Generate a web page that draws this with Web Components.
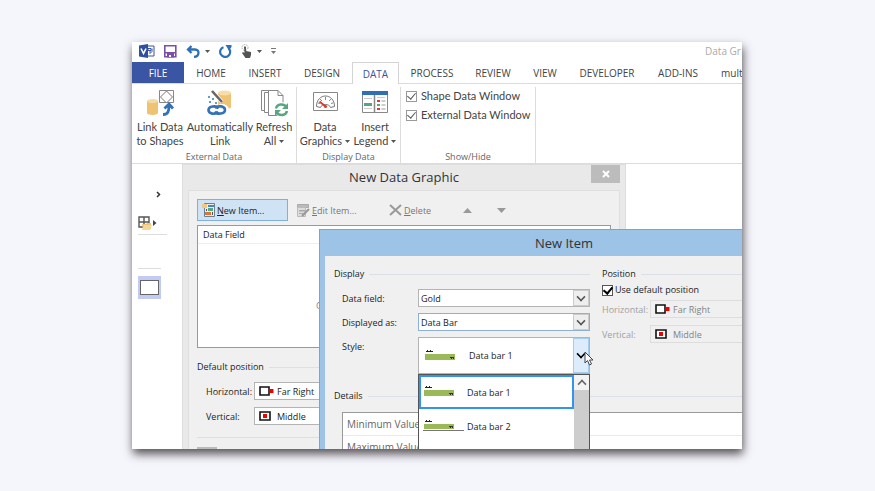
<!DOCTYPE html>
<html lang="en">
<head>
<meta charset="utf-8">
<title>Data Graphics</title>
<style>
  body { margin: 0; min-height: 100vh; display: flex; background: #f5f6fc; font-family: "Open Sans", "Noto Sans", sans-serif; color: #444; }
</style>
</head>
<body>
<app-window></app-window>
<script>
const define = (name, html) => customElements.define(name, class extends HTMLElement {
  connectedCallback() {
    if (this.shadowRoot) return;
    const t = document.createElement('template');
    t.innerHTML = typeof html === 'function' ? html(this) : html;
    this.attachShadow({ mode: 'open' }).append(t.content.cloneNode(true));
  }
});
const RESET = `:host,*{box-sizing:border-box} button,select,input{font:inherit;color:inherit;margin:0;padding:0;border:0;background:none;border-radius:0} svg{display:block;flex:none}`;

const ICONS = {
  visio: [16, 14, `<path d="M7 2h8v10H7z" fill="#fff" stroke="#3955a3"/><path d="M9 4.500h3v2H9zM11 6.500v3M11 9.500l2-2v-3" fill="none" stroke="#3955a3"/><path d="M0 1.500 9 0v14l-9-1.500z" fill="#2f4f9f"/><path d="m2 4.500 2.500 5 2.500-5" fill="none" stroke="#fff" stroke-width="1.600"/>`],
  save: [13, 13, `<path d="M.8.800h11v11h-11z" fill="#fff" stroke="#7b4fa8" stroke-width="1.600"/><path d="M1 7h11v1.500H1zM3 8h7v4.500H3z" fill="#7b4fa8"/><path d="M5 10h2v2H5z" fill="#fff"/>`],
  undo: [15, 13, `<path d="M2 4.500h7c5 0 4.500 7-1 7.500M5.500 1 2 4.500 5.500 8" fill="none" stroke="#2c6fba" stroke-width="2.300"/>`],
  redo: [13, 13, `<path d="M4.500 2.200a5 5 0 1 0 5 1" fill="none" stroke="#2c6fba" stroke-width="2.200"/><path d="M6.500 0h6v2L10 5.500z" fill="#2c6fba"/>`],
  touch: [12, 14, `<circle cx="4" cy="3.500" r="3" fill="none" stroke="#aaa" stroke-dasharray="1.500 1"/><path d="M3 3q1-1.500 2 0v4l5 1v3l-1 3H4.500L1 9l1-1 1.500 1z" fill="#555"/>`],
  caret: [5, 3, `<path d="M0 0h5L2.500 3z" fill="#555"/>`],
  more: [5, 6, `<path d="M0 0h5v1H0zM0 3h5L2.500 6z" fill="#777"/>`],
  link: [28, 30, `<path d="M13.500 2.500h14v12h-14z" fill="#fff" stroke="#888"/><path d="m20.500 3 6 6-6 6-6-6z" fill="#fff" stroke="#777"/><path d="M1 13v12c0 2.500 11 2.500 11 0V13z" fill="#eec374"/><ellipse cx="6.500" cy="13" rx="5.500" ry="2" fill="#f6dba0"/><path d="M17 26.500c5 0 6-3 6-9M18.500 20.500l4.500-4.500 4 4.500" fill="none" stroke="#3272b8" stroke-width="2.800"/>`],
  auto: [28, 30, `<path d="M12 5v14c0 3 13 3 13 0V5z" fill="#eec374"/><ellipse cx="18.500" cy="5" rx="6.500" ry="2.500" fill="#f7dda6"/><path d="m6 3 10 11" stroke="#fff" stroke-width="4"/><path d="m6 3 10 11" stroke="#666" stroke-width="2.600"/><path d="M2 8h2v2H2zM6 10h2v2H6zM3 13h2v2H3zM9 14h2v2H9z" fill="#6b99cc"/><g fill="none" stroke="#fff" stroke-width="6"><ellipse cx="8" cy="22" rx="4" ry="3"/><ellipse cx="16" cy="22" rx="4" ry="3"/></g><g fill="none" stroke="#3272b8" stroke-width="2.600"><path d="M12.500 20.500c-2-3.500-10-2.500-10 1.500s7 5 10 2"/><path d="M9 23.500c2 3.500 10 2.500 10-1.500s-7-5-10-2"/></g>`],
  refresh: [30, 30, `<g fill="#fff" stroke="#888"><path d="M2.500 2.500h11v20h-11z"/><path d="M5.500 4.500h12v20h-12z"/><path d="M9.500 2.500H19l5 5v20H9.500z"/><path d="M19 2.500v5h5" fill="none"/></g><circle cx="22.500" cy="21.500" r="7.500" fill="#fff"/><path d="M17 20.500c1-5 8-5 10.500-1.500M28 23c-1 5-8 5-10.500 1.500" fill="none" stroke="#57a581" stroke-width="2.400"/><path d="M29 15v6h-6zM16 28v-6h6z" fill="#57a581"/>`],
  gauge: [28, 30, `<path d="M2.500 4.500h24v18h-24z" fill="#fff" stroke="#888"/><path d="M5.500 18.500c0-14 18-14 18 0l-4 1c-1-4-9-4-10 0z" fill="#fff" stroke="#777"/><path d="m7 15 2 .5M9 11l2 2M14.500 9v3M20 11l-2 2M22 15l-2 .5" stroke="#888"/><path d="m8.500 13.500 6 5" stroke="#d6402f" stroke-width="2"/><circle cx="14.500" cy="18.500" r="1.600" fill="#d6402f"/>`],
  legend: [28, 30, `<path d="M1.500 3.500h25v21h-25z" fill="#fff" stroke="#888"/><path d="M1 3h26v4H1z" fill="#2f6fb3"/><path d="M13.500 7v17" stroke="#888" stroke-width="1.500"/><path d="M3 10.500h8M3 20.500h8M16 9.500h8" stroke="#ccc"/><path d="M3 15h8v3H3z" fill="#57a581"/><path d="M16 12h3v2h-3z" fill="#d6402f"/><path d="M16 16h3v2h-3z" fill="#57a581"/><path d="M16 20h3v2h-3z" fill="#d6402f"/><path d="M20.500 13h4M20.500 17h4M20.500 21h4" stroke="#999"/>`],
  chevR: [5, 7, `<path d="m1 1 2.500 2.500L1 6" fill="none" stroke="#333" stroke-width="1.500"/>`],
  stencil: [20, 15, `<path d="M1 1h10v10H1zM6 1v10M1 6h10" fill="none" stroke="#555" stroke-width="1.400"/><path d="M4 8h4l1-1h4v6H5z" fill="#eec374"/><path d="m6 9h8l-2 5H4z" fill="#f5d79c"/><path d="m15 4 3.500 3-3.500 3z" fill="#444"/>`],
  newItem: [13, 14, `<path d="M2.500.500h10v13h-10z" fill="#e9edf1" stroke="#6f7f90"/><path d="M0 1h5v4H0z" fill="#f0c880"/><path d="M6 2h6v2H6z" fill="#4b83c2"/><path d="M6 5h5v3H6z" fill="#57a581"/><path d="M3 9h6v3H3z" fill="#dc7440"/><path d="M4.500 6v2M10.500 9v3" stroke="#555"/>`],
  edit: [13, 13, `<path d="M.500.500h11v3H.500z" fill="#bbb" stroke="#aaa"/><path d="M.500 3.500h8v9h-8z" fill="#ddd" stroke="#bbb"/><path d="M2 6h6v1.500H2zM2 9h4v1H2z" fill="#aaa"/><path d="m5 12 7-7" stroke="#999" stroke-width="2.200"/>`],
  cross: [13, 12, `<path d="m1 1 11 10M12 1 1 11" fill="none" stroke="#999" stroke-width="2"/>`],
  up: [9, 5, `<path d="M0 5h9L4.500 0z" fill="#999"/>`],
  down: [9, 5, `<path d="M0 0h9L4.500 5z" fill="#999"/>`],
  close: [8, 8, `<path d="m1 1 6 6M7 1 1 7" stroke="#fff" stroke-width="2"/>`],
  far: [15, 10, `<path d="M1 1h9v8H1z" fill="#fff" stroke="#111" stroke-width="1.600"/><path d="M10.500 3h4v4h-4z" fill="#e00"/>`],
  mid: [15, 10, `<path d="M1 1h10v8H1z" fill="#fff" stroke="#111" stroke-width="1.600"/><path d="M4 3h4v4H4z" fill="#e00"/>`],
  bar: [42, 16, `<path d="M2 3h1V2h1v1h2V2h1v1h2v1H2z" fill="#222"/><path d="M1 6h30v6H1z" fill="#9aba59"/><path d="M26 9h2v2h-1v-1h-1zM28 9h2v2h-1v-1h-1z" fill="#333"/>`],
  bar2: [42, 16, `<path d="M2 3h1V2h1v1h2V2h1v1h2v1H2z" fill="#222"/><path d="M1 6h30v5H1z" fill="#9aba59"/><path d="M26 8h2v2h-1V9h-1zM28 8h2v2h-1V9h-1z" fill="#333"/><path d="M0 12.500h41" stroke="#777"/>`],
  cursor: [10, 15, `<path d="M1 1v11l2.500-2.500L5.500 14l2-1-2-4H9z" fill="#fff" stroke="#444"/>`],
};
const icon = n => { const [w, h, d] = ICONS[n]; return `<svg width="${w}" height="${h}" viewBox="0 0 ${w} ${h}" aria-hidden="true">${d}</svg>`; };

define('ui-icon', el => `<style>:host{display:block;flex:none}svg{display:block}</style>${icon(el.getAttribute('name'))}`);

define('quick-bar', `<style>${RESET}
  :host{display:flex;align-items:center;height:20px;padding:0 0 2px 7px;font-size:10px;line-height:16px;color:#aaa;white-space:nowrap}
  nav{display:flex;align-items:center;gap:9px;flex:1}
  button{display:flex;align-items:center;gap:4px}
  span{flex:none;width:37px}</style>
  <nav aria-label="Quick access">
    <button aria-label="Visio">${icon('visio')}</button><button aria-label="Save">${icon('save')}</button>
    <button aria-label="Undo">${icon('undo')}${icon('caret')}</button><button aria-label="Redo">${icon('redo')}</button>
    <button aria-label="Touch mode">${icon('touch')}${icon('caret')}</button><button aria-label="Customize">${icon('more')}</button>
  </nav><span>Data Gr</span>`);

define('ribbon-tabs', `<style>${RESET}
  :host{display:grid;grid-template-columns:52px 54px 54px 60px 47px 66px 56px 48px 76px 66px 1fr;height:22px;border-bottom:1px solid #dcdcdc;font-size:10px;line-height:20px}
  button{white-space:nowrap;text-align:center;min-width:0}
  .file{background:#3955a3;color:#fff}
  .on{color:#3955a3;background:#fff;border:1px solid #d4d4d4;border-bottom:0;margin-bottom:-1px}
  .last{text-align:left;padding-left:10px}</style>
  <button class="file">FILE</button><button>HOME</button><button>INSERT</button><button>DESIGN</button><button class="on" aria-current="true">DATA</button><button>PROCESS</button><button>REVIEW</button><button>VIEW</button><button>DEVELOPER</button><button>ADD-INS</button><button class="last">mult</button>`);

define('ribbon-button', el => `<style>${RESET}
  :host{display:block}
  button{display:flex;flex-direction:column;align-items:center;width:100%;font-size:11px;line-height:14px;white-space:nowrap;color:#444}
  svg:first-child{margin-bottom:2px}
  .l{display:flex;align-items:center;gap:3px} .l svg{margin:0}</style>
  <button>${icon(el.getAttribute('icon'))}<span>${el.getAttribute('top')}</span><span class="l">${el.getAttribute('bottom')}${el.hasAttribute('menu') ? icon('caret') : ''}</span></button>`);

define('ribbon-group', el => `<style>
  :host{box-sizing:border-box;display:flex;flex-direction:column;justify-content:space-between;border-right:1px solid #dcdcdc;margin-top:3px;flex:none}
  footer{text-align:center;font:9px/12px "Open Sans",sans-serif;color:#666}</style>
  <div><slot></slot></div><footer>${el.getAttribute('label')}</footer>`);

define('tick-box', el => `<style>${RESET}
  :host{display:flex}
  label{display:flex;align-items:center;gap:4px;white-space:nowrap}
  input{appearance:none;width:11px;height:11px;border:1px solid #9a9a9a;background:#fff;flex:none;display:grid;place-items:center}
  input:checked::before{content:"";width:4px;height:7px;border:solid #555;border-width:0 1px 1px 0;transform:rotate(40deg);margin-top:-2px}
  :host([strong]) label{gap:2px} :host([strong]) input{border-color:#555} :host([strong]) input:checked::before{border-color:#000;border-width:0 2px 2px 0}</style>
  <label><input type="checkbox" checked><slot></slot></label>`);

define('ribbon-bar', `<style>
  :host{box-sizing:border-box;display:flex;height:80px;border-bottom:1px solid #dcdcdc;font-family:Lato,"Open Sans",sans-serif}
  .a{width:165px}.b{width:104px}.c{width:135px}
  .ext{display:grid;grid-template-columns:54px 66px 42px;padding:1px 0 0 1px}
  .dis{display:grid;grid-template-columns:54px 46px;padding:1px 0 0 1px}
  .chk{display:grid;gap:3px;padding:1px 0 0 5px;font-size:11px;line-height:16px}
</style>
<ribbon-group class="a" label="External Data"><div class="ext">
  <ribbon-button icon="link" top="Link Data" bottom="to Shapes"></ribbon-button>
  <ribbon-button icon="auto" top="Automatically" bottom="Link"></ribbon-button>
  <ribbon-button icon="refresh" top="Refresh" bottom="All" menu></ribbon-button></div></ribbon-group>
<ribbon-group class="b" label="Display Data"><div class="dis">
  <ribbon-button icon="gauge" top="Data" bottom="Graphics" menu></ribbon-button>
  <ribbon-button icon="legend" top="Insert" bottom="Legend" menu></ribbon-button></div></ribbon-group>
<ribbon-group class="c" label="Show/Hide"><div class="chk">
  <tick-box>Shape Data Window</tick-box><tick-box>External Data Window</tick-box></div></ribbon-group>`);

define('side-pane', `<style>${RESET}
  :host{display:flex;flex-direction:column;align-items:flex-start;width:50px;padding:27px 0 0 6px}
  button{display:block}
  .exp{margin-left:18px}
  .sten{margin-top:18px}
  hr{width:29px;height:1px;border:0;background:#ddd;margin:3px 0 0}
  .two{width:23px;margin:33px 0 7px}
  .page{width:23px;height:23px;padding:4px 2px;background:#c2ccf3}
  .page span{display:block;height:15px;border:1px solid #666;background:#fff}</style>
  <button class="exp" aria-label="Expand">${icon('chevR')}</button>
  <button class="sten" aria-label="Stencils">${icon('stencil')}</button><hr><hr class="two">
  <button class="page" aria-label="Page"><span></span></button>`);

define('section-head', `<style>:host{display:flex;align-items:center;gap:5px;line-height:16px;color:#222;white-space:nowrap}
  i{flex:1;height:1px;background:#dadfe8}</style><slot></slot><i></i>`);

define('select-row', el => {
  const a = n => el.getAttribute(n);
  return `<style>${RESET}
  :host{display:grid;grid-template-columns:var(--label,48px) 1fr;align-items:center}
  label{white-space:nowrap;line-height:16px;padding-top:1px}
  .box{display:flex;align-items:center;height:18px;border:1px solid #b4b4b4;background:#fff;min-width:0}
  .box ui-icon{margin:0 1px 0 4px}
  select{appearance:none;flex:1;min-width:0;height:100%;padding-left:2px;outline:0}
  .btn{width:16px;height:16px;display:grid;place-items:center;background:#eee;border:1px solid #ccc;flex:none}
  .btn::before{content:"";width:6px;height:6px;border:solid #555;border-width:0 2px 2px 0;transform:rotate(45deg) scale(.8);margin-top:-3px}
  :host([focus]) .box{border-color:#8fb0d6}
  :host([off]) label{color:#a0a0a0} :host([off]) select{color:#838383;opacity:1} :host([off]) .box{background:#f0f0f0;border-color:#ddd;border-right:0}
  :host([tall]){align-items:start} :host([tall]) label{padding-top:2px}
  :host([tall]) .box{height:37px} :host([tall]) .btn{height:35px;background:#dcecfa;border-color:#a5cdf0}
  :host([tall]) .btn::before{border-color:#000}
  :host([tall]) .box ui-icon{margin:0 1px 0 5px}</style>
  <label for="s">${a('label')}</label><div class="box">${a('icon') ? `<ui-icon name="${a('icon')}"></ui-icon>` : ''}<select id="s"${el.hasAttribute('off') ? ' disabled' : ''}><option>${a('value')}</option></select>${el.hasAttribute('bare') ? '' : '<span class="btn"></span>'}</div>`;
});

define('graphic-dialog', `<style>${RESET}
  :host{display:flex;flex-direction:column;background:#e9e9e9;border:1px solid #ddd;border-bottom:0;font-size:9px;color:#222}
  header{display:grid;grid-template-columns:34px 1fr 29px;margin-right:5px;height:25px}
  h2{margin:0;font-size:13px;line-height:25px;font-weight:400;text-align:center;color:#333}
  .x{height:18px;background:#bcbcbc;display:grid;place-items:center}
  .body{flex:1;margin:0 5px;background:#f0f0f0;border:1px solid #e0e0e0;border-bottom:0;padding:8px 8px 0}
  .tools{display:grid;grid-template-columns:91px 83px 48px auto auto 1fr;column-gap:9px;align-items:center;height:22px}
  .tools button{display:flex;align-items:center;gap:2px;white-space:nowrap;color:#777}
  .tools .new{height:22px;padding-left:4px;gap:2px;background:#cfe3f5;border:1px solid #80b1de;color:#222}
  .tools .up{margin-left:17px}.tools .dn{margin-left:16px}
  table{width:100%;height:123px;margin-top:4px;border:1px solid #999;background:#fff;border-collapse:separate;border-spacing:0}
  th{height:18px;text-align:left;font-weight:400;padding:0 5px;border-bottom:1px solid #eee}
  td{padding:20px 0 0 118px;color:#888}
  section-head{margin-top:11px}
  .rows{display:grid;gap:7px;padding:7px 0 12px 9px}
  hr{border:0;height:1px;background:#dadfe8;margin:0 0 9px}
  .stub{width:20px;height:8px;background:#bbb}</style>
  <header><span></span><h2>New Data Graphic</h2><button class="x" aria-label="Close">${icon('close')}</button></header>
  <div class="body">
    <div class="tools"><button class="new">${icon('newItem')}<span><u>N</u>ew Item...</span></button><button>${icon('edit')}<span><u>E</u>dit Item...</span></button><button>${icon('cross')}<span><u>D</u>elete</span></button><button class="up" aria-label="Move up">${icon('up')}</button><button class="dn" aria-label="Move down">${icon('down')}</button></div>
    <table><thead><tr><th>Data Field</th></tr></thead><tbody><tr><td>C</td></tr></tbody></table>
    <section-head>Default position</section-head>
    <div class="rows"><select-row label="Horizontal:" value="Far Right" icon="far"></select-row><select-row label="Vertical:" value="Middle" icon="mid"></select-row></div>
    <hr><div class="stub"></div>
  </div>`);

define('style-menu', `<style>${RESET}
  :host{display:grid;grid-template-columns:1fr 15px;min-height:104px;border:1px solid #555;background:#fff;color:#222}
  ul{list-style:none;margin:0;padding:0}
  li{display:flex;align-items:center;gap:2px;height:34px;padding-left:4px;white-space:nowrap}
  li[aria-selected=true]{border:2px solid #3393f0;padding-left:2px}
  .bar{background:#cdcdcd}
  button{display:grid;place-items:center;width:15px;height:15px;background:#f3f3f3}
  button::before{content:"";width:6px;height:6px;border:solid #666;border-width:2px 0 0 2px;transform:rotate(45deg) scale(.8);margin-top:3px}</style>
  <ul role="listbox" aria-label="Style"><li role="option" aria-selected="true">${icon('bar')}Data bar 1</li><li role="option">${icon('bar2')}Data bar 2</li></ul>
  <div class="bar"><button aria-label="Scroll up"></button></div>`);

define('item-dialog', `<style>${RESET}
  :host{display:flex;flex-direction:column;background:#9dc3e6;border:1px solid #7fa3c6;border-right:0;border-bottom:0;font-size:9px;color:#222}
  h2{margin:0;padding-left:66px;font-size:13px;line-height:26px;font-weight:400;text-align:center;color:#333}
  .body{flex:1;margin-left:5px;background:#f0f0f0;padding:10px 0 0 9px}
  .cols{display:grid;grid-template-columns:256px 1fr;gap:12px}
  .left{--label:76px;position:relative}
  .rows{display:grid;gap:6px;padding:7px 0 0 8px}
  .right .rows{padding:0;gap:7px}
  tick-box{line-height:16px;margin-bottom:2px}
  style-menu{position:absolute;left:84px;right:0;top:108px;z-index:2}
  ui-icon.ptr{position:absolute;left:250px;top:85px;z-index:3}
  .det{margin-top:14px}
  table{width:calc(100% - 8px);margin:8px 0 0 8px;border:1px solid #999;border-right:0;background:#fff;border-spacing:0;font-size:10px;color:#666}
  td{height:23px;padding:0 4px;border-bottom:1px solid #eaeaea}</style>
  <h2>New Item</h2>
  <div class="body"><div class="cols">
    <div class="left"><section-head>Display</section-head><div class="rows">
      <select-row label="Data field:" value="Gold"></select-row>
      <select-row label="Displayed as:" value="Data Bar" focus></select-row>
      <select-row label="Style:" value="Data bar 1" icon="bar" tall></select-row></div>
      <style-menu></style-menu><ui-icon class="ptr" name="cursor"></ui-icon></div>
    <div class="right"><section-head>Position</section-head><tick-box strong>Use default position</tick-box><div class="rows">
      <select-row label="Horizontal:" value="Far Right" icon="far" off bare></select-row>
      <select-row label="Vertical:" value="Middle" icon="mid" off bare></select-row></div></div>
  </div>
  <section-head class="det">Details</section-head>
  <table><tr><td>Minimum Value</td></tr><tr><td>Maximum Value</td></tr></table></div>`);

define('app-window', `<style>
  :host{flex:1;display:flex;padding:42px 133px 42px 132px}
  main{flex:1;min-width:0;display:flex;flex-direction:column;box-shadow:1px 5px 9px 0 rgba(45,40,45,.8);background:#fff}
  .clip{flex:1;display:flex;flex-direction:column;overflow:hidden}
  .desk{flex:1;position:relative;display:flex;overflow:hidden}
  graphic-dialog{position:absolute;left:50px;top:0;bottom:0;width:444px;overflow:hidden}
  item-dialog{position:absolute;left:187px;top:65px;right:0;bottom:0;overflow:hidden}</style>
  <main><div class="clip"><quick-bar></quick-bar><ribbon-tabs></ribbon-tabs><ribbon-bar></ribbon-bar>
  <div class="desk"><side-pane></side-pane><graphic-dialog></graphic-dialog><item-dialog></item-dialog></div></div></main>`);
</script>
</body>
</html>
